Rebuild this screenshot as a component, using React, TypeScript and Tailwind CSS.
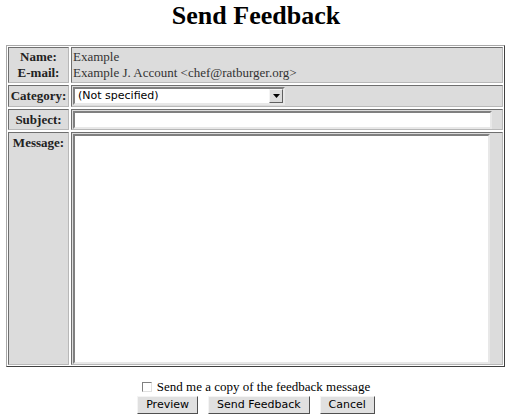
export default function App() {
  const serif = { fontFamily: '"Liberation Serif", serif' }
  const sans = { fontFamily: '"DejaVu Sans", sans-serif' }
  const cell = "bg-[#dcdcdc] border border-t-[#6f6f6f] border-l-[#6f6f6f] border-b-[#b8b8b8] border-r-[#b8b8b8]"
  const label = `${cell} px-[1px] text-center font-bold text-[13px] text-[#222]`
  const field = "bg-white border-2 border-t-[#808080] border-l-[#808080] border-b-[#e8e8e8] border-r-[#e8e8e8]"

  return (
    <div className="w-[512px] h-[419px] bg-white text-black" style={serif}>
      <h1 className="pt-[2px] text-center text-[26px] font-bold leading-[28px]">Send Feedback</h1>

      <div className="mx-[6px] mt-[15px] w-[499px] border border-t-[#a8a8a8] border-l-[#a8a8a8] border-b-[#404040] border-r-[#404040] p-[1px]">
        <div className="grid grid-cols-[61px_1fr] gap-[2px]">
          <div className={`${label} h-[36px] py-[1px] leading-[16px]`}>
            <div>Name:</div>
            <div>E-mail:</div>
          </div>
          <div className={`${cell} h-[36px] py-[1px] pl-[1px] text-[13px] leading-[16px] text-[#333]`}>
            <div>Example</div>
            <div>Example J. Account &lt;chef@ratburger.org&gt;</div>
          </div>

          <div className={`${label} flex items-center justify-center h-[22px]`}>Category:</div>
          <div className={`${cell} flex items-center h-[22px] pl-[1px]`}>
            <div className={`${field} flex h-[18px] w-[212px] items-stretch`}>
              <span className="flex-1 pl-[3px] text-[11px] leading-[14px]" style={sans}>(Not specified)</span>
              <span className="flex w-[14px] items-center justify-center bg-[#dcdcdc] border border-t-[#f4f4f4] border-l-[#f4f4f4] border-b-[#606060] border-r-[#606060]">
                <svg width="7" height="5" viewBox="0 0 7 5"><path d="M0 0h7L3.5 4z" fill="#000" /></svg>
              </span>
            </div>
          </div>

          <div className={`${label} flex items-center justify-center h-[21px]`}>Subject:</div>
          <div className={`${cell} flex items-center h-[21px] pl-[1px]`}>
            <div className={`${field} h-[18px] w-[419px]`} />
          </div>

          <div className={`${label} h-[233px] pt-[2px] leading-[16px]`}>Message:</div>
          <div className={`${cell} h-[233px] pl-[1px] pt-[1px]`}>
            <div className={`${field} h-[230px] w-[417px]`} />
          </div>
        </div>
      </div>

      <div className="mt-[12px] flex items-center justify-center gap-[5px] text-[13px] leading-[15px]">
        <span className="h-[10px] w-[10px] border border-t-[#808080] border-l-[#808080] border-b-[#e0e0e0] border-r-[#e0e0e0] bg-white" />
        <span>Send me a copy of the feedback message</span>
      </div>
      <div className="mt-[2px] flex justify-center gap-[10px] text-[11px]" style={sans}>
        {["Preview", "Send Feedback", "Cancel"].map((b) => (
          <button
            key={b}
            className="h-[18px] px-[8px] leading-[14px] bg-[#e0e0e0] border border-t-[#f4f4f4] border-l-[#f4f4f4] border-b-[#505050] border-r-[#505050]"
          >
            {b}
          </button>
        ))}
      </div>
    </div>
  )
}
